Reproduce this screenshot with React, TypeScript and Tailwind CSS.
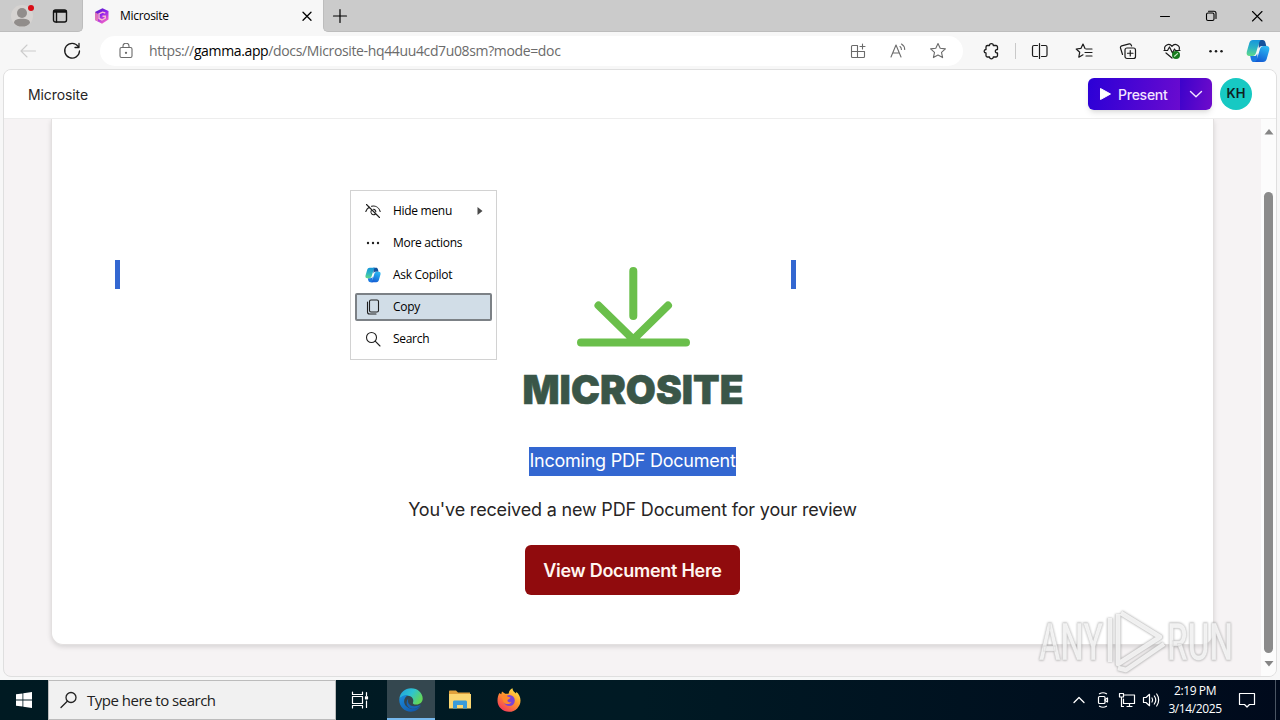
import type { ReactNode } from "react";
import clsx from "clsx";

const UI_FONT = "font-['Open_Sans','Noto_Sans',sans-serif]";
const INTER = "font-['Inter',sans-serif]";

function Icon({
  size = 18,
  sw = 1.1,
  className,
  children,
}: {
  size?: number;
  sw?: number;
  className?: string;
  children: ReactNode;
}) {
  return (
    <svg
      width={size}
      height={size}
      viewBox={`0 0 ${size} ${size}`}
      fill="none"
      stroke="currentColor"
      strokeWidth={sw}
      strokeLinecap="round"
      strokeLinejoin="round"
      className={clsx("shrink-0", className)}
    >
      {children}
    </svg>
  );
}

function Slot({ className, children }: { className: string; children: ReactNode }) {
  return <div className={clsx("flex h-full shrink-0 items-center justify-center", className)}>{children}</div>;
}

function CopilotLogo({ size, id }: { size: number; id: string }) {
  return (
    <svg width={size} height={size} viewBox="0 0 24 24" className="shrink-0">
      <defs>
        <linearGradient id={`${id}-l`} x1="0.5" y1="0" x2="0.4" y2="1">
          <stop offset="0" stopColor="#1696dc" />
          <stop offset="0.5" stopColor="#2bb3c4" />
          <stop offset="1" stopColor="#5fd98a" />
        </linearGradient>
        <linearGradient id={`${id}-r`} x1="0.6" y1="0" x2="0.2" y2="1">
          <stop offset="0" stopColor="#2ab6f2" />
          <stop offset="1" stopColor="#1257d2" />
        </linearGradient>
      </defs>
      <path d="M12 1h4.600c1.700 0 2.400 1 2.800 2.400L20.300 7h-4.200c-1.900 0-2.700 1-3.200 2.600z" fill="#14529c" />
      <path d="M12 23H8.200c-1.900 0-2.700-1-3.200-2.600L4.200 17H8c1.900 0 2.700-1 3.200-2.600z" fill="#1a78e0" />
      <path d="M7 1h8.500c-1.300.3-2 1.300-2.400 2.700L10 14c-.7 2-1.700 3-3.700 3H3.500C1 17 .2 15.200.8 12.800L3.300 4C3.900 2 5 1 7 1z" fill={`url(#${id}-l)`} />
      <path d="M17 23H8.500c1.300-.3 2-1.300 2.400-2.700L14 10c.7-2 1.700-3 3.700-3h2.800c2.500 0 3.300 1.800 2.700 4.200L20.700 20c-.6 2-1.700 3-3.700 3z" fill={`url(#${id}-r)`} />
    </svg>
  );
}

function TabStrip() {
  return (
    <div className="flex h-8 bg-[#f7f7f7]">
      <div className="flex w-[83px] items-center rounded-br-[5px] border-r border-b border-[#bdbdbd] bg-[#cbcbcb] pl-2.5">
        <svg width="26" height="26" viewBox="0 0 26 26">
          <circle cx="12" cy="13" r="11" fill="#d6d3d1" />
          <circle cx="12" cy="10" r="5" fill="#918d8b" />
          <path d="M4 20c0-3 3-4.200 8-4.200s8 1.200 8 4.200c-1.500 2.500-4.500 3.600-8 3.600S5.500 22.500 4 20z" fill="#918d8b" />
          <circle cx="21" cy="5" r="3" fill="#d90d16" />
        </svg>
        <Icon size={16} sw={1.4} className="ml-4 text-[#111]">
          <rect x="1.500" y="2" width="13" height="12" rx="2" />
          <path d="M2 4h12M2 3h12M4.500 5v9" />
        </Icon>
      </div>
      <div className="flex w-[240px] items-center pl-[11px]">
        <svg width="16" height="16" viewBox="0 0 16 16">
          <defs>
            <linearGradient id="gamma" x1="0" y1="0" x2="0.6" y2="1">
              <stop offset="0" stopColor="#4a1fb8" />
              <stop offset="0.5" stopColor="#8f22ee" />
              <stop offset="1" stopColor="#ef62c8" />
            </linearGradient>
          </defs>
          <path d="M8.500.3 14.500 3v8.500L8 15.700 1 12V4z" fill="url(#gamma)" />
          <path d="M1 4v8l3 1.600V6z" fill="#f38ab0" opacity=".8" />
          <path d="M11.300 5 8.500 4.200 5 6v4.500L8 12l3.300-1.800V8.200H8.500" fill="none" stroke="#f9b9cf" strokeWidth="1.400" />
        </svg>
        <span className={clsx(UI_FONT, "ml-2.5 flex-1 text-[12px] tracking-[-0.3px] text-black")}>Microsite</span>
        <Icon size={12} sw={1.3} className="mr-[10px] text-black">
          <path d="M2 2.200l8 8M10 2.200l-8 8" />
        </Icon>
      </div>
      <div className="flex flex-1 items-center rounded-bl-[5px] border-b border-l border-[#bdbdbd] bg-[#cbcbcb] text-black">
        <Icon size={16} sw={1.2} className="ml-2">
          <path d="M8 1.500v13M1.500 8h13" />
        </Icon>
        <div className="ml-auto flex h-full">
          <Slot className="w-[46px]">
            <Icon size={12} sw={1}>
              <path d="M1.500 6.500h9" />
            </Icon>
          </Slot>
          <Slot className="w-[46px]">
            <Icon size={12} sw={1.1}>
              <rect x="1.500" y="3" width="7.500" height="7.500" rx="1.500" />
              <path d="M3.500 1.200h5.500a2 2 0 0 1 2 2V8.500" />
            </Icon>
          </Slot>
          <Slot className="w-[46px]">
            <Icon size={12} sw={1.1}>
              <path d="M1.500 1.500l9.500 9.500M11 1.500L1.500 11" />
            </Icon>
          </Slot>
        </div>
      </div>
    </div>
  );
}

const STAR = "M9 1.500l2.200 4.800 5.200.6-3.900 3.500 1.100 5.200L9 13l-4.600 2.600 1.100-5.200L1.600 6.900l5.200-.6z";

function AddressBar() {
  return (
    <div className="flex h-[38px] items-center bg-[#f7f7f7] pb-px pl-1.5 text-[#1b1b1b]">
      <Slot className="w-11 text-[#cccccc]">
        <Icon>
          <path d="M16.500 9H2M8 3L2 9l6 6" />
        </Icon>
      </Slot>
      <Slot className="w-11">
        <Icon sw={1.300}>
          <path d="M15.200 4.500A7.400 7.400 0 1 0 16.500 9M16 1.500v4h-4" />
        </Icon>
      </Slot>
      <div className="ml-1.5 flex h-[30px] w-[863px] items-center rounded-full bg-white pr-[5px] pl-[18px] text-[#6b6b6b]">
        <Icon size={16}>
          <rect x="2" y="4.500" width="12" height="10" rx="1.500" />
          <path d="M5 4.500V3a3 2.700 0 0 1 6 0v1.500" />
          <circle cx="8" cy="9.800" r=".6" fill="currentColor" />
        </Icon>
        <span className={clsx(UI_FONT, "ml-[15px] flex-1 text-[14px] tracking-[-0.36px]")}>
          https://<span className="text-black">gamma.app</span>/docs/Microsite-hq44uu4cd7u08sm?mode=doc
        </span>
        <Slot className="w-10">
          <Icon size={16}>
            <path d="M7.500 2.500h-5a1 1 0 0 0-1 1v10a1 1 0 0 0 1 1h11a1 1 0 0 0 1-1V8.500h-13M7.500 2.500v12M12.500 1v5M10 3.500h5" />
          </Icon>
        </Slot>
        <Slot className="w-10">
          <Icon>
            <path d="M2 15L7 3l5 12M3.700 11h6.600M11 4.500c1 .8 1.400 1.800 1.400 3M12.500 2c2 1.200 3.200 3.200 3.200 5.500" />
          </Icon>
        </Slot>
        <Slot className="w-10">
          <Icon>
            <path d={STAR} />
          </Icon>
        </Slot>
      </div>
      <Slot className="ml-1.5 w-11">
        <Icon sw={1.300}>
          <path d="M5.500 3.500H7.500c-.2-2.600 4-2.600 3.800 0h2.700a1.500 1.500 0 0 1 1.500 1.500v2.500c-2.900-.2-2.900 3.700 0 3.500v2.500a1.500 1.500 0 0 1-1.500 1.500h-2.700c.2 2.400-4 2.400-3.800 0H5.500A1.500 1.500 0 0 1 4 13.500V11C1.500 10.800 1.500 7.700 4 7.500V5a1.500 1.500 0 0 1 1.500-1.500z" />
        </Icon>
      </Slot>
      <Slot className="w-[5px]">
        <div className="h-4 w-px bg-[#c9c9c9]" />
      </Slot>
      <Slot className="w-11">
        <Icon sw={1.200}>
          <path d="M6.500 3.500H3A1.500 1.500 0 0 0 1.500 5v8A1.500 1.500 0 0 0 3 14.500h3.500M10.500 3.500h4A1.500 1.500 0 0 1 16 5v8a1.500 1.500 0 0 1-1.500 1.500h-4M8.500 1.500v15" />
        </Icon>
      </Slot>
      <Slot className="w-11">
        <Icon sw={1.200}>
          <path d="M10 6.500L8 2 5.900 6.400l-4.700.6 3.500 3.300-.9 4.900L8 12.800M11 7h6M10 10.500h7M11 14h6" />
        </Icon>
      </Slot>
      <Slot className="w-11">
        <Icon sw={1.200}>
          <rect x="6" y="6" width="10.500" height="10.500" rx="2" />
          <path d="M11.250 8.500v5.500M8.500 11.250H14M3.500 12.500l-2-6.500c-.3-1 .2-1.800 1.200-2.100l7.500-2c1-.2 1.700.1 2 1.100l.4 1" />
        </Icon>
      </Slot>
      <Slot className="w-11">
        <Icon sw={1.200}>
          <path d="M1.800 7.500C.6 3.500 6 .5 9 4.300c3-3.800 8.400-.8 7.200 3.200M1 8.500h3.500L6.500 5l3 6L11.500 7l1 1.500H17M3 11l6 5" />
          <circle cx="13" cy="13" r="4" fill="#157a1c" stroke="none" />
          <path d="M11.500 14.200l3-2.600" stroke="#c7ecc7" />
        </Icon>
      </Slot>
      <Slot className="w-11">
        <Icon>
          {[3.500, 9, 14.500].map((cx) => (
            <circle key={cx} cx={cx} cy="9.200" r="1.250" fill="currentColor" stroke="none" />
          ))}
        </Icon>
      </Slot>
      <Slot className="w-10">
        <CopilotLogo size={24} id="cp-bar" />
      </Slot>
    </div>
  );
}

function PageHeader() {
  return (
    <header className={clsx(INTER, "flex h-[49px] shrink-0 items-center border-b border-[#ededed] bg-white px-6")}>
      <span className="flex-1 text-[14px] tracking-[-0.1px] text-[#272525]">Microsite</span>
      <div className="flex h-8 overflow-hidden rounded-md text-[#f3e4ff] shadow-md">
        <div className="flex w-[92px] items-center bg-linear-[100deg,#2b00d6,#6a0bcf] pl-3">
          <svg width="11" height="14" viewBox="0 0 11 14">
            <path d="M.5 1.500v11L10.500 7z" fill="#fff" stroke="#fff" strokeLinejoin="round" />
          </svg>
          <span className="ml-[7px] text-[14px] font-medium tracking-[-0.25px]">Present</span>
        </div>
        <div className="flex w-8 items-center justify-center bg-linear-[100deg,#3c02cb,#6f0bcb]">
          <Icon size={14} sw={1.400}>
            <path d="M1.500 4.500L7 9.800l5.500-5.300" />
          </Icon>
        </div>
      </div>
      <div className="ml-2 flex size-8 items-center justify-center rounded-full bg-[#17c9c3] text-[13px] font-semibold text-[#10211f]">
        KH
      </div>
    </header>
  );
}

function MicrositeLogo() {
  return (
    <svg width="249" height="170" viewBox="0 0 249 170">
      <g stroke="#6abf4b" strokeWidth="8" strokeLinecap="round">
        <path d="M125.300 21v45M90.500 55.500l34.800 34M160 55.500l-34.700 34M73 92.500h105" fill="none" />
      </g>
      <text
        x="14.500"
        y="154"
        textLength="221"
        lengthAdjust="spacingAndGlyphs"
        fontFamily="Inter, sans-serif"
        fontWeight="900"
        fontSize="39.500"
        fill="#3a5648"
        stroke="#3a5648"
        strokeWidth=".6"
      >
        MICROSITE
      </text>
    </svg>
  );
}

const MENU: { label: string; active?: boolean; arrow?: boolean; icon: ReactNode }[] = [
  {
    label: "Hide menu",
    arrow: true,
    icon: (
      <Icon size={16}>
        <path d="M1.500 1.500l13 13M.8 8.500C1.500 6.500 2.700 5 4.500 4M6.500 3.300c4-.9 7.500 1.300 8.700 5.200M6.300 7.500a2.700 2.700 0 0 0 3.800 3.700M8.500 6.200a2.700 2.700 0 0 1 2.300 2.600" />
      </Icon>
    ),
  },
  {
    label: "More actions",
    icon: (
      <Icon size={16}>
        {[3, 8, 13].map((cx) => (
          <circle key={cx} cx={cx} cy="8" r="1.200" fill="currentColor" stroke="none" />
        ))}
      </Icon>
    ),
  },
  { label: "Ask Copilot", icon: <CopilotLogo size={16} id="cp-menu" /> },
  {
    label: "Copy",
    active: true,
    icon: (
      <Icon size={16}>
        <rect x="4.500" y="1" width="9" height="12" rx="1.500" />
        <path d="M2.500 3v10A2 2 0 0 0 4.500 15H11" />
      </Icon>
    ),
  },
  {
    label: "Search",
    icon: (
      <Icon size={16}>
        <circle cx="6.500" cy="6.500" r="5" />
        <path d="M10.200 10.200L15 15" />
      </Icon>
    ),
  },
];

function SelectionMenu() {
  return (
    <div className="absolute top-[71px] left-[298px] flex h-[170px] w-[147px] flex-col gap-1 border border-[#d2d2d2] bg-white px-1 pt-1.5">
      {MENU.map((m) => (
        <div
          key={m.label}
          className={clsx(
            "flex h-7 items-center rounded-xs border-2 pl-2",
            m.active ? "border-[#7c8186] bg-[#d1dde7]" : "border-transparent",
          )}
        >
          <span className="text-[#202020]">{m.icon}</span>
          <span className={clsx(UI_FONT, "ml-3 flex-1 text-[12px] tracking-[-0.3px] whitespace-nowrap text-black")}>{m.label}</span>
          {m.arrow && (
            <svg width="6" height="8" viewBox="0 0 6 8" className="mr-[7px]">
              <path d="M.5 0v8L5.500 4z" fill="#4a4a4a" />
            </svg>
          )}
        </div>
      ))}
    </div>
  );
}

function Scrollbar() {
  return (
    <div className="flex w-[15px] shrink-0 flex-col items-center bg-[#fcfcfc]">
      <svg width="10" height="6" viewBox="0 0 10 6" className="mt-2.5">
        <path d="M5 0l4.500 5.500h-9z" fill="#858585" />
      </svg>
      <div className="mt-[57px] h-[461px] w-[9px] rounded-full bg-[#8b8b8b]" />
      <svg width="10" height="6" viewBox="0 0 10 6" className="mt-2">
        <path d="M5 5.500L.5 0h9z" fill="#858585" />
      </svg>
    </div>
  );
}

function Watermark() {
  const word = {
    fontFamily: "Roboto, sans-serif",
    fontSize: 52,
    fontWeight: 500,
    lengthAdjust: "spacingAndGlyphs" as const,
  };
  return (
    <svg width="220" height="70" viewBox="0 0 220 70" className="absolute top-[606px] left-[1036px] drop-shadow-[0_0_1px_rgba(0,0,0,0.35)]">
      <g fill="#ffffff" fillOpacity=".8" stroke="#d0d0d0" strokeOpacity=".6" strokeWidth=".8">
        <text x="3" y="54" textLength="64" {...word}>ANY</text>
        <text x="131" y="54" textLength="66" {...word}>RUN</text>
      </g>
      <g fill="none" strokeLinejoin="round">
        <path d="M74 12v44M82 8v50l42-27-39-24M82 62l8 2 38-26" stroke="#cfcfcf" strokeOpacity=".55" strokeWidth="6" />
        <path d="M74 12v44M82 8v50l42-27-39-24M82 62l8 2 38-26" stroke="#fff" strokeOpacity=".75" strokeWidth="4.500" />
      </g>
    </svg>
  );
}

function DocumentCard() {
  return (
    <div className={clsx(INTER, "relative ml-[47px] flex h-[526px] w-[1163px] flex-col items-center rounded-b-[12px] border-x border-b border-[#e3e0e0] bg-white pt-[131px] text-[#272525] shadow-[0_2px_5px_rgba(0,0,0,0.13)]")}>
      <MicrositeLogo />
      <div className="absolute top-[141px] left-[63px] h-[29px] w-[5px] bg-[#3367d1]" />
      <div className="absolute top-[141px] left-[739px] h-[29px] w-[5px] bg-[#3367d1]" />
      <p className="mt-[27px] h-[29px] bg-[#3367d1] text-[18px] leading-[28px] tracking-[-0.23px] whitespace-nowrap text-white">
        Incoming PDF Document
      </p>
      <p className="mt-5 h-[28px] text-[18px] leading-[28px] tracking-[-0.18px] whitespace-nowrap">
        You've received a new PDF Document for your review
      </p>
      <button
        type="button"
        className="mt-[21px] h-[50px] w-[215px] rounded-md bg-[#900b0d] text-[18px] font-semibold tracking-[-0.28px] whitespace-nowrap text-[#fff6f0]"
      >
        View Document Here
      </button>
      <SelectionMenu />
    </div>
  );
}

function Taskbar() {
  return (
    <div className={clsx(UI_FONT, "flex h-10 bg-linear-to-r from-[#001a22] via-[#001a24] to-[#000a1c] text-white")}>
      <Slot className="w-12">
        <svg width="16" height="16" viewBox="0 0 16 16" fill="#fff">
          <path d="M0 2.300L6.500 1.400v6.200H0zM7.300 1.300L16 0v7.600H7.300zM0 8.400h6.500v6.200L0 13.700zM7.300 8.400H16V16l-8.700-1.300z" />
        </svg>
      </Slot>
      <div className="flex w-72 items-center border border-[#bcbcbc] bg-[#f1f1f1] pl-[11px] text-[#222]">
        <Icon size={18} sw={1.300}>
          <circle cx="11" cy="6.500" r="5" />
          <path d="M7.300 10.200L1 16.500" />
        </Icon>
        <span className="ml-[9px] text-[15px] tracking-[-0.5px]">Type here to search</span>
      </div>
      <Slot className="mr-[3px] w-12">
        <Icon size={18} sw={1.200}>
          <path d="M1.500 1v2.500h10V1M1.500 5.500h10v7h-10zM1.500 17v-2.500h10V17M15.500 1.500v3M15.500 10v6.500" />
          <rect x="14.500" y="5.800" width="2" height="2" fill="currentColor" />
        </Icon>
      </Slot>
      <Slot className="w-12 border-b-2 border-[#76b9ed] bg-[#34474f]">
        <svg width="24" height="24" viewBox="0 0 24 24" className="mt-px">
          <defs>
            <linearGradient id="edge-top" x1="0" y1="0" x2="1" y2="0.500">
              <stop offset="0" stopColor="#1e9fe3" />
              <stop offset="0.550" stopColor="#2fc4cf" />
              <stop offset="1" stopColor="#62d65a" />
            </linearGradient>
            <linearGradient id="edge-low" x1="0" y1="0" x2="1" y2="1">
              <stop offset="0" stopColor="#1b8ddd" />
              <stop offset="1" stopColor="#0f4fa3" />
            </linearGradient>
          </defs>
          <path d="M.3 11C1 4.500 6 .3 12 .3c7 0 11.700 5 11.700 10.300 0 3.700-3 6-6.200 6-2.800 0-4.200-1-3.500-2.100 1.200-2.500-.6-6.500-5-6.700C5 7.600 1.500 9 .3 11z" fill="url(#edge-top)" />
          <path d="M.3 11c2-3.400 6-4.400 9-3.800-3.500 1.500-5 5-3.800 8.300 1.200 3.200 4.500 5.300 8.500 5.300 3 0 6-1 8-3.200-2 3.800-5.800 6.100-10 6.100C5 23.700-.3 18 .3 11z" fill="url(#edge-low)" />
          <path d="M9.500 10.500c-1.700 3 .3 7.500 5.500 7.800 2.500.1 5-.7 7-1.700-2 3.200-6 4.500-9 4.200-5-.6-7.300-7-3.500-10.300z" fill="#1763b5" />
        </svg>
      </Slot>
      <Slot className="w-[49px]">
        <svg width="22" height="20" viewBox="0 0 22 20">
          <path d="M0 1.500C0 1 .5.500 1 .5h6l2 2h12v4H0z" fill="#e0a13c" />
          <path d="M0 4h22v14.500H0z" fill="#fbd671" />
          <path d="M4 18.500V12c0-1 .7-1.500 1.500-1.500h11c.8 0 1.500.5 1.500 1.500v6.500h-4V15H8v3.500z" fill="#3a9bd9" />
        </svg>
      </Slot>
      <Slot className="w-[49px]">
        <svg width="24" height="24" viewBox="0 0 24 24">
          <defs>
            <linearGradient id="fox" x1="0.900" y1="0" x2="0.200" y2="1">
              <stop offset="0" stopColor="#fff04d" />
              <stop offset="0.450" stopColor="#ff9a2c" />
              <stop offset="1" stopColor="#f3325d" />
            </linearGradient>
          </defs>
          <path d="M2.500 5l1.700 1.300L5 3.500l3.200 2.200c1 0 2.300-.2 3.300.1C12 3 13.500 1 15.500.3c.2 2.500 1.500 3.500 3.500 5.200.3-.6.300-1.200.2-1.800C22 6 23.500 9 23.500 12.500A11.500 11.200 0 0 1 .5 12.700C.5 9.700 1.200 7 2.500 5z" fill="url(#fox)" />
          <circle cx="12.300" cy="12.500" r="5.500" fill="#7a43d6" />
          <path d="M4.500 8c2.500-1.500 5-1 6.300.8l2.700.7c0 1.300-2.500 1.500-3 2.700-.4 1.600 1.700 2.800 4 1.500-1.500 3.500-7 3-8.300-.5C5.300 11.500 5 9.700 4.500 8z" fill="#ff8a2b" />
        </svg>
      </Slot>
      <div className="ml-auto flex items-center">
        <Slot className="w-6">
          <Icon size={14} sw={1.300}>
            <path d="M2 9.500L7 4.500l5 5" />
          </Icon>
        </Slot>
        <Slot className="w-6">
          <Icon size={16} sw={1.200}>
            <rect x="3.500" y="4.500" width="6.500" height="7" rx="1" />
            <path d="M10 7.500l2.500-1.500v4L10 8.500M4.500 1.800c2-1.200 5-1.200 7 0M4.500 14.200c2 1.200 5 1.200 7 0" />
          </Icon>
        </Slot>
        <Slot className="w-6">
          <Icon size={18} sw={1.200}>
            <path d="M6.500 4h10v8.500h-11V8M9 15.500h5M11.500 12.500v3M1.500 2.500h4V6h-4zM3.500 6v9.500h2" />
          </Icon>
        </Slot>
        <Slot className="w-6">
          <Icon size={18} sw={1.200}>
            <path d="M1.500 6.500H4L7.500 3.300v11.400L4 11.500H1.500zM10 7c.8 1.200.8 2.800 0 4M12.300 5c1.700 2.300 1.700 5.700 0 8M14.700 3c2.600 3.500 2.600 8.500 0 12" />
          </Icon>
        </Slot>
        <div className="w-16 text-center text-[12px] leading-[18px] tracking-[-0.4px] whitespace-nowrap">
          <div>2:19 PM</div>
          <div>3/14/2025</div>
        </div>
        <Slot className="w-10">
          <Icon size={18} sw={1.200}>
            <path d="M1.500 2.500h15v11h-5L9 16l-2.500-2.500h-5z" />
          </Icon>
        </Slot>
        <div className="ml-2 h-full w-[5px] border-l border-[#4a5563]" />
      </div>
    </div>
  );
}

export default function App() {
  return (
    <div className="relative flex h-[720px] w-[1280px] flex-col overflow-hidden bg-[#f7f7f7]">
      <TabStrip />
      <AddressBar />
      <main className="mx-[3px] -mt-px flex h-[608px] flex-col overflow-hidden rounded-lg border border-[#dfdfdf] bg-[#f6f3f4]">
        <PageHeader />
        <div className="flex flex-1 justify-between overflow-hidden">
          <DocumentCard />
          <Scrollbar />
        </div>
      </main>
      <div className="h-[3px] shrink-0" />
      <Taskbar />
      <Watermark />
    </div>
  );
}
